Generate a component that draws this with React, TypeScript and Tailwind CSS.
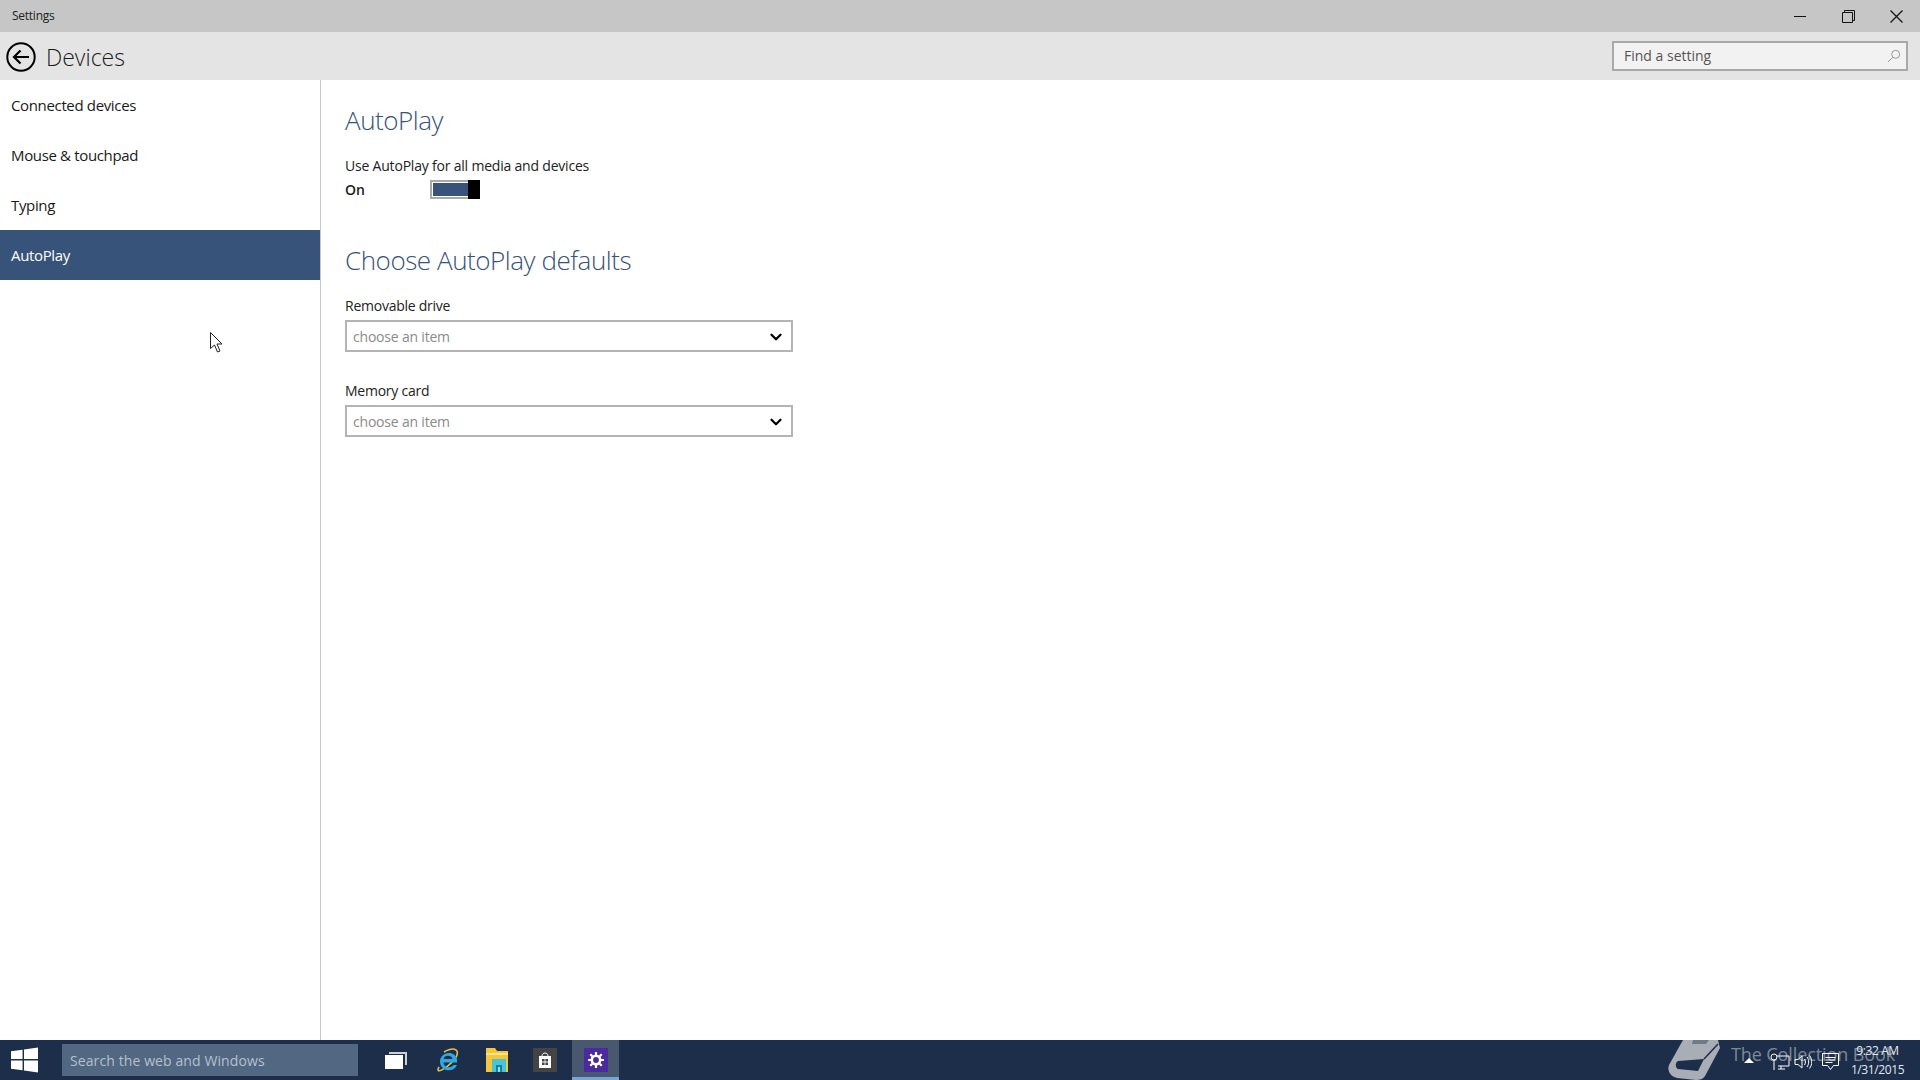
import React from 'react';
import { ChevronDown } from 'lucide-react';

const navItems = ['Connected devices', 'Mouse & touchpad', 'Typing', 'AutoPlay'];

const Dropdown = ({ label }: { label: string }) => (
  <div>
    <p className="text-[14px] leading-[20px] text-[#222] tracking-[-0.25px]">{label}</p>
    <div className="mt-[4px] h-[32px] w-[448px] border-2 border-[#b4b4b4] flex items-center justify-between pl-[6px] pr-[6px]">
      <span className="text-[14px] text-[#8a8a8a] tracking-[-0.2px]">choose an item</span>
      <ChevronDown size={18} strokeWidth={3} className="text-black mt-[1px]" />
    </div>
  </div>
);

const App = () => {
  return (
    <div className="relative w-[1920px] h-[1080px] overflow-hidden flex flex-col bg-white font-['Open_Sans','Noto_Sans',sans-serif]">
      {/* Title bar */}
      <div className="h-[32px] shrink-0 bg-[#c6c6c6] flex items-center justify-between pl-[12px]">
        <span className="text-[12px] text-[#222] tracking-[-0.25px]">Settings</span>
        <div className="flex items-center">
          <div className="w-[48px] flex justify-center">
            <svg width="12" height="12" viewBox="0 0 12 12"><path d="M0 6.5h12" stroke="#111" fill="none" /></svg>
          </div>
          <div className="w-[48px] flex justify-center">
            <svg width="13" height="13" viewBox="0 0 13 13" fill="none" stroke="#111"><path d="M.5 2.5h10v10H.5zM2.5 2.5v-2h10v10h-2" /></svg>
          </div>
          <div className="w-[48px] flex justify-center">
            <svg width="13" height="13" viewBox="0 0 13 13" fill="none" stroke="#111" strokeWidth="1.2"><path d="M.5.5l12 12M12.5.5l-12 12" /></svg>
          </div>
        </div>
      </div>

      {/* Header */}
      <div className="h-[48px] shrink-0 bg-[#e4e4e4] flex items-center justify-between pl-[6px] pr-[12px]">
        <div className="flex items-center gap-[10px] mt-[2px]">
          <svg width="30" height="30" viewBox="0 0 30 30" fill="none" stroke="#000">
            <circle cx="15" cy="15" r="13.7" strokeWidth="2" />
            <path d="M23 15H8M14.5 8.5L8 15l6.5 6.5" strokeWidth="2.2" />
          </svg>
          <span className="text-[23px] font-light text-[#1a1a1a]">Devices</span>
        </div>
        <div className="w-[296px] h-[30px] border-2 border-[#a9a9a9] bg-[#f2f2f2] flex items-center justify-between pl-[10px] pr-[5px]">
          <span className="text-[14px] text-[#555] mb-[2px]">Find a setting</span>
          <svg width="14" height="14" viewBox="0 0 14 14" fill="none" stroke="#9a9a9a"><circle cx="8.7" cy="5.3" r="4" /><path d="M5.8 8.2L1 13" /></svg>
        </div>
      </div>

      {/* Body */}
      <div className="flex-1 flex min-h-0">
        <aside className="w-[321px] shrink-0 border-r border-[#c8c8c8]">
          {navItems.map((item) => (
            <div
              key={item}
              className={`h-[50px] flex items-center pl-[11px] text-[15px] tracking-[-0.35px] ${
                item === 'AutoPlay' ? 'bg-[#375379] text-white w-[320px]' : 'text-[#1a1a1a]'
              }`}
            >
              {item}
            </div>
          ))}
        </aside>

        <main className="flex-1 pl-[24px] pt-[22px]">
          <h1 className="text-[26px] leading-[36px] font-light text-[#375379] tracking-[-0.45px]">AutoPlay</h1>
          <p className="mt-[18px] text-[14px] leading-[20px] text-[#222] tracking-[-0.2px]">Use AutoPlay for all media and devices</p>
          <div className="mt-[3px] flex items-center h-[20px]">
            <span className="w-[85px] text-[14px] font-semibold text-[#1a1a1a]">On</span>
            <div className="relative w-[50px] h-[19px] border-2 border-[#a9a9a9] p-[1px]">
              <div className="h-full w-[35px] bg-[#375379]" />
              <div className="absolute right-[-2px] top-[-2px] w-[12px] h-[19px] bg-black" />
            </div>
          </div>
          <h2 className="mt-[43px] text-[26px] leading-[36px] font-light text-[#375379] tracking-[-0.45px]">Choose AutoPlay defaults</h2>
          <div className="mt-[18px] flex flex-col gap-[29px]">
            <Dropdown label="Removable drive" />
            <Dropdown label="Memory card" />
          </div>
        </main>
      </div>

      {/* Taskbar */}
      <div className="h-[40px] shrink-0 bg-[#1c2e4a] flex items-center">
        <div className="w-[62px] flex justify-start pl-[11px]">
          <svg width="27" height="26" viewBox="0 0 28 26" fill="#fff"><path d="M0 4l12-1.7V12H0zM13.5 2L28 0v12H13.5zM0 13.5h12v10L0 22zM13.5 13.5H28V26l-14.5-2z" /></svg>
        </div>
        <div className="w-[296px] h-[32px] bg-[#526782] flex items-center pl-[8px]">
          <span className="text-[14px] text-[#b4c0ce] tracking-[0.1px]">Search the web and Windows</span>
        </div>
        <div className="w-[27px]" />
        <svg width="22" height="17" viewBox="0 0 22 17"><path d="M4 0h18v13h-2V2H4z" fill="#cfcfcf" /><path d="M0 3h18v14H0z" fill="#fff" /></svg>
        <div className="w-[28px]" />
        <svg width="24" height="26" viewBox="0 0 24 26" fill="none">
          <path d="M4 20C0 27 9 24 20 12 26 3 20-1 9 5" stroke="#e8c24a" strokeWidth="1.6" />
          <path d="M20 15.5H8.5c.3 5 7 6.5 10 2.5h3.5c-3 8-17 7-17-3.5C5 5 20 2 22 12.5v3z" fill="#2fa9e0" />
          <path d="M8.5 12h9c-.5-4.5-8.5-4.5-9 0z" fill="#1c2e4a" />
        </svg>
        <div className="w-[27px]" />
        <svg width="22" height="24" viewBox="0 0 22 24"><path d="M0 0h9l2 3h11v21H0z" fill="#f4c63c" /><path d="M0 5h22v2H0z" fill="#ffe28a" /><path d="M6 11h14v13H6z" fill="#45c6d8" /><path d="M10 17h6v7h-6z" fill="#1c7f9a" /><path d="M12 19h2v5h-2z" fill="#8ce4ee" /></svg>
        <div className="w-[25px]" />
        <div className="w-[24px] h-[24px] bg-[#444] flex items-center justify-center">
          <svg width="14" height="16" viewBox="0 0 14 16"><path d="M4 4C4 0 10 0 10 4" stroke="#fff" fill="none" /><path d="M1 4h12v12H1z" fill="#fff" /><path d="M4 7h2.6v2.6H4zM7.4 7H10v2.6H7.4zM4 10.4h2.6V13H4zM7.4 10.4H10V13H7.4z" fill="#444" /></svg>
        </div>
        <div className="ml-[15px] w-[47px] h-[40px] bg-[#47586f] border-b-[3px] border-[#76a5d8] flex items-start justify-center pt-[8px]">
          <div className="w-[24px] h-[24px] bg-[#4b2aa0] flex items-center justify-center">
            <svg width="16" height="16" viewBox="0 0 16 16" fill="none" stroke="#fff">
              <circle cx="8" cy="8" r="4.2" strokeWidth="2.6" />
              <path d="M8 0v3M8 13v3M0 8h3M13 8h3M2.3 2.3l2 2M11.7 11.7l2 2M13.7 2.3l-2 2M4.3 11.7l-2 2" strokeWidth="2.2" />
            </svg>
          </div>
        </div>
      </div>

      {/* Tray and watermark sit over the taskbar */}
      <svg className="absolute left-[1668px] top-[1040px]" width="54" height="40" viewBox="0 0 54 40">
        <path d="M15 0H50L52 8 37 36C35 39 32 40 28 40L9 38C2 36-1 31 1 25z" fill="#a9aeb6" />
        <path d="M10 21L36 19 30 31 10 29C7 27 7 23 10 21z" fill="#1c2e4a" />
        <path d="M36 19L50 4" stroke="#1c2e4a" strokeWidth="1.5" fill="none" />
        <path d="M25 0H41L38 4H24z" fill="#6f7a89" />
      </svg>
      <span className="absolute left-[1731px] top-[1041px] text-[18px] text-[#7f8896] tracking-[-0.1px]">The Collection Book</span>
      <svg className="absolute left-[1744px] top-[1058px]" width="10" height="5" viewBox="0 0 10 5"><path d="M5 0L10 5H0z" fill="#fff" /></svg>
      <svg className="absolute left-[1770px] top-[1053px]" width="20" height="18" viewBox="0 0 20 18" fill="none" stroke="#fff"><circle cx="4" cy="4" r="3" /><path d="M4 7v10M7 3h12v10H8M11 13v3M8 16h7" /></svg>
      <svg className="absolute left-[1794px] top-[1054px]" width="18" height="16" viewBox="0 0 18 16" fill="none" stroke="#fff"><path d="M1 5.5h3L8 2v12l-4-3.5H1zM10.5 5c1.2 1.7 1.2 4.3 0 6M13 3c2.2 3 2.2 7 0 10M15.5 1.5c3 4 3 9 0 13" /></svg>
      <svg className="absolute left-[1822px] top-[1053px]" width="17" height="18" viewBox="0 0 17 18" fill="none" stroke="#fff"><path d="M.5.5h16v12h-5l-3 4-3-4h-5zM3.5 4.5h10M3.5 7h10M3.5 9.5h7" /></svg>
      <div className="absolute left-[1851px] top-[1041px] w-[53px] flex flex-col items-center text-[12px] leading-[19px] text-[#e6e9ee] tracking-[-0.4px]">
        <span>9:32 AM</span>
        <span>1/31/2015</span>
      </div>

      {/* Mouse pointer */}
      <svg className="absolute left-[210px] top-[332px]" width="14" height="21" viewBox="0 0 14 21"><path d="M.5.5v16l4-3.5 3 7 2.5-1-3-7H12z" fill="#fff" stroke="#222" /></svg>
    </div>
  );
};

export default App;
